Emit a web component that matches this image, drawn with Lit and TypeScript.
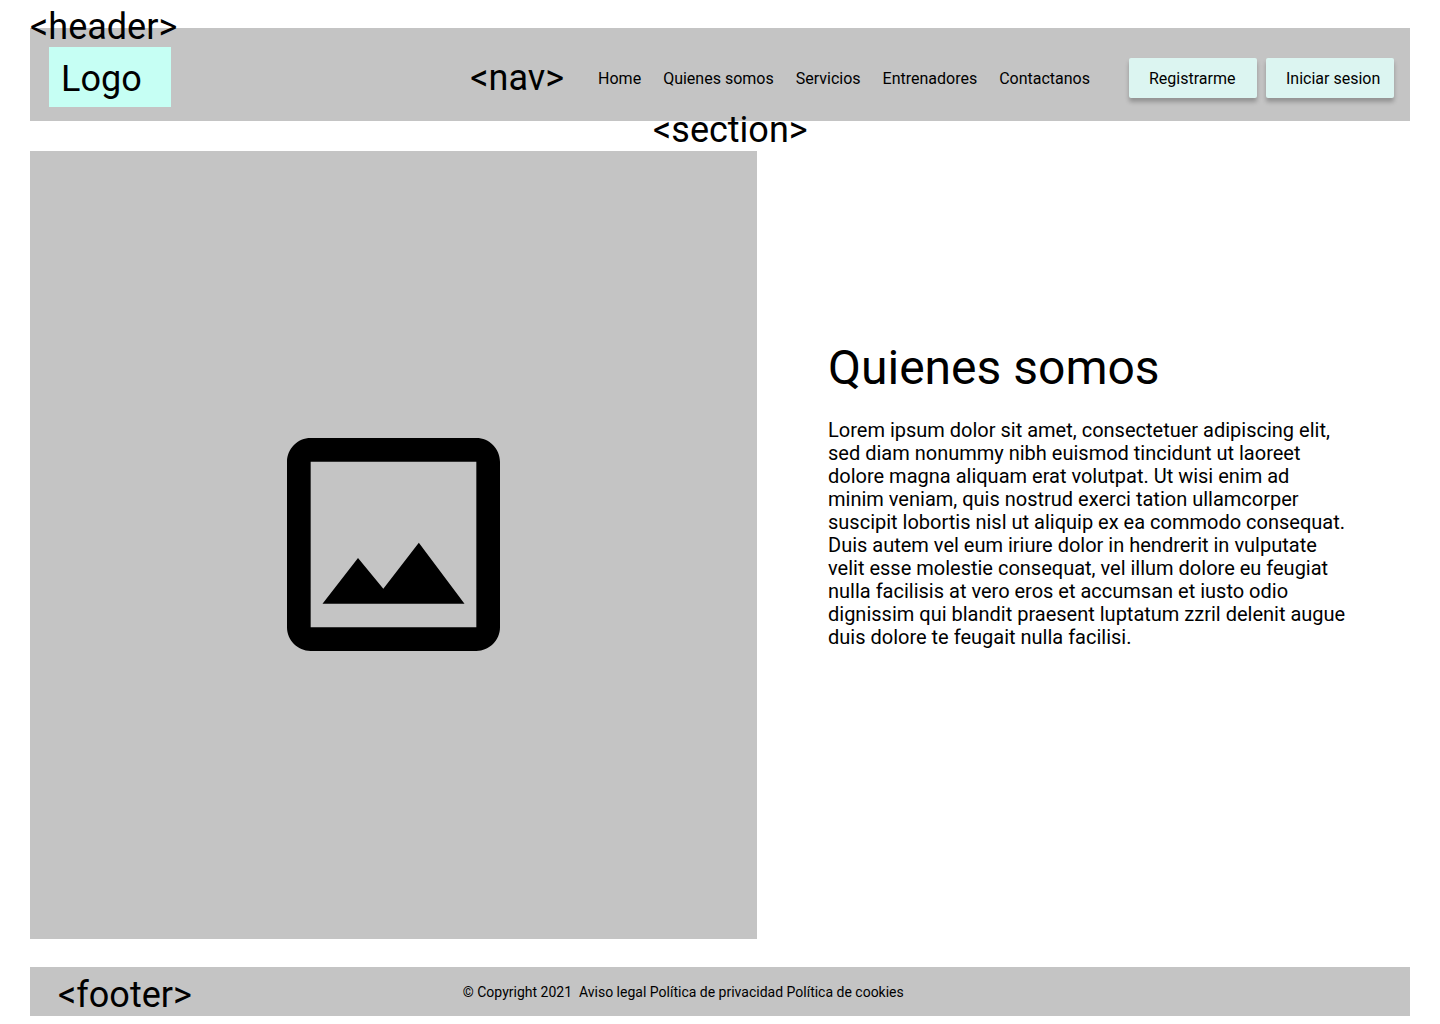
import { LitElement, html, css } from "lit";
import { customElement } from "lit/decorators.js";

@customElement("app-root")
export class AppRoot extends LitElement {
  static styles = css`
    :host {
      display: block;
      background: #fff;
      color: #000;
      font-family: Roboto, "Liberation Sans", sans-serif;
      font-size: 16px;
      line-height: 19px;
    }
    * {
      box-sizing: border-box;
    }
    a {
      color: inherit;
      text-decoration: none;
    }
    .page {
      display: flex;
      flex-direction: column;
      min-height: 100vh;
      padding: 28px 30px 8px;
    }
    .tag {
      font-size: 36px;
      line-height: 42px;
      white-space: nowrap;
    }
    .header {
      position: relative;
      display: flex;
      align-items: center;
      justify-content: space-between;
      min-height: 93px;
      padding: 0 16px 0 19px;
      background: #c4c4c4;
    }
    .header-tag {
      position: absolute;
      left: 0;
      top: -22px;
    }
    .section-tag {
      position: absolute;
      left: 50%;
      bottom: -30px;
      margin-left: -67px;
    }
    .logo {
      width: 122px;
      height: 60px;
      margin-top: 4px;
      padding: 11px 12px;
      background: #c6fff4;
      font-size: 36px;
      line-height: 42px;
    }
    .bar {
      display: flex;
      align-items: center;
      margin-top: 6px;
    }
    .nav {
      display: flex;
      align-items: center;
      gap: 34px;
    }
    .links {
      display: flex;
      gap: 22px;
      margin: 0;
      padding: 2px 0 0;
      list-style: none;
    }
    .actions {
      display: flex;
      gap: 9px;
      margin-left: 39px;
    }
    .button {
      width: 128px;
      height: 40px;
      padding: 2px 0 0 20px;
      border: 0;
      border-radius: 2px;
      background: #dcf5f1;
      box-shadow: 0 4px 4px rgba(0, 0, 0, 0.25);
      color: inherit;
      font: inherit;
      text-align: left;
      white-space: nowrap;
      cursor: pointer;
    }
    .section {
      display: grid;
      grid-template-columns: 727fr 653fr;
      flex: 1;
      margin: 30px 0 28px;
    }
    .picture {
      display: flex;
      align-items: center;
      justify-content: center;
      padding-bottom: 1px;
      background: #c4c4c4;
    }
    .picture-icon {
      width: 213px;
      height: 213px;
    }
    .about {
      align-self: center;
      padding: 0 62px 102px 71px;
    }
    .title {
      margin: 0 0 23px;
      font-size: 48px;
      line-height: 56px;
      font-weight: 400;
    }
    .text {
      margin: 0;
      font-size: 20px;
      line-height: 23px;
    }
    .footer {
      display: flex;
      align-items: center;
      gap: 271px;
      min-height: 49px;
      padding: 0 28px;
      background: #c4c4c4;
    }
    .footer-tag {
      padding-top: 6px;
    }
    .legal {
      font-size: 14px;
      line-height: 16px;
      white-space: pre;
    }
  `;

  private links = ["Home", "Quienes somos", "Servicios", "Entrenadores", "Contactanos"];

  render() {
    return html`
      <div class="page">
        <header class="header">
          <span class="tag header-tag">&lt;header&gt;</span>
          <a class="logo" href="#">Logo</a>
          <div class="bar">
            <nav class="nav">
              <span class="tag">&lt;nav&gt;</span>
              <ul class="links">
                ${this.links.map((link) => html`<li><a href="#">${link}</a></li>`)}
              </ul>
            </nav>
            <div class="actions">
              <button class="button" type="button">Registrarme</button>
              <button class="button" type="button">Iniciar sesion</button>
            </div>
          </div>
          <span class="tag section-tag">&lt;section&gt;</span>
        </header>
        <section class="section">
          <div class="picture">
            <svg class="picture-icon" viewBox="0 0 18 18" role="img" aria-label="Imagen">
              <path
                d="M16 2v14H2V2h14m0-2H2C.9 0 0 .9 0 2v14c0 1.1.9 2 2 2h14c1.1 0 2-.9 2-2V2c0-1.1-.9-2-2-2zm-4.86 8.86l-3 3.87L6 10.14 3 14h12l-3.86-5.14z"
              />
            </svg>
          </div>
          <div class="about">
            <h1 class="title">Quienes somos</h1>
            <p class="text">
              Lorem ipsum dolor sit amet, consectetuer adipiscing elit, sed diam nonummy nibh euismod
              tincidunt ut laoreet dolore magna aliquam erat volutpat. Ut wisi enim ad minim veniam,
              quis nostrud exerci tation ullamcorper suscipit lobortis nisl ut aliquip ex ea commodo
              consequat. Duis autem vel eum iriure dolor in hendrerit in vulputate velit esse molestie
              consequat, vel illum dolore eu feugiat nulla facilisis at vero eros et accumsan et iusto
              odio dignissim qui blandit praesent luptatum zzril delenit augue duis dolore te feugait
              nulla facilisi.
            </p>
          </div>
        </section>
        <footer class="footer">
          <span class="tag footer-tag">&lt;footer&gt;</span>
          <div class="legal">© Copyright 2021  <a href="#">Aviso legal</a> <a href="#">Política de privacidad</a> <a href="#">Política de cookies</a></div>
        </footer>
      </div>
    `;
  }
}
